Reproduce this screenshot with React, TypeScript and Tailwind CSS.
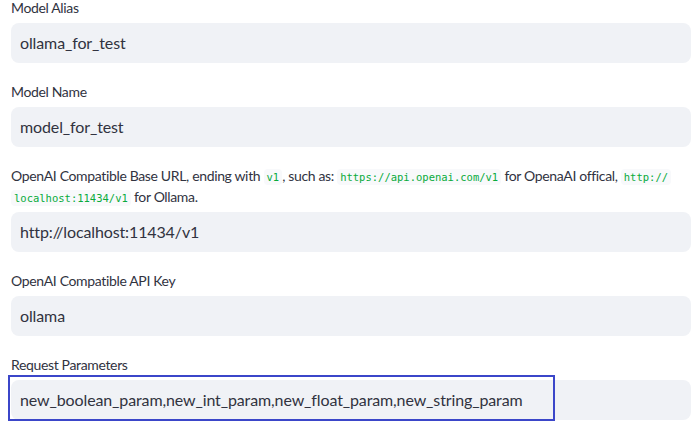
import React from 'react';

const Code: React.FC<{ children: React.ReactNode }> = ({ children }) => (
  <code className="rounded-[4px] bg-[#f8f9fb] px-[3px] py-[2px] font-['DejaVu_Sans_Mono',monospace] text-[10.5px] leading-none tracking-normal text-[#09ab3b]">
    {children}
  </code>
);

interface FieldProps {
  label: React.ReactNode;
  value: string;
  focused?: boolean;
}

const Field: React.FC<FieldProps> = ({ label, value, focused }) => (
  <div className="flex flex-col">
    <label className="-mt-[3px] mb-[5px] text-[14px] leading-[21px] tracking-[-0.35px] text-[#31333f]">{label}</label>
    <div className="relative flex h-10 items-center rounded-lg bg-[#f0f2f6] pl-[9px] text-[16px] tracking-[-0.12px] text-[#31333f]">
      {focused && (
        <div className="absolute top-[-5px] bottom-[-1px] left-[-3px] w-[547px] border-2 border-[#3b46c9]" />
      )}
      <span>{value}</span>
    </div>
  </div>
);

export default function App() {
  return (
    <div className="flex h-[441px] w-[700px] flex-col gap-[21px] overflow-hidden bg-white pl-[11px] pr-[9px] pt-0 font-['Source_Sans_Pro','Lato',sans-serif]">
      <Field label="Model Alias" value="ollama_for_test" />
      <Field label="Model Name" value="model_for_test" />
      <Field
        label={
          <>
            OpenAI Compatible Base URL, ending with <Code>v1</Code>, such as: <Code>https://api.openai.com/v1</Code> for
            OpenaAI offical, <Code>http://</Code>
            <br />
            <Code>localhost:11434/v1</Code> for Ollama.
          </>
        }
        value="http://localhost:11434/v1"
      />
      <Field label="OpenAI Compatible API Key" value="ollama" />
      <Field
        label="Request Parameters"
        value="new_boolean_param,new_int_param,new_float_param,new_string_param"
        focused
      />
    </div>
  );
}
